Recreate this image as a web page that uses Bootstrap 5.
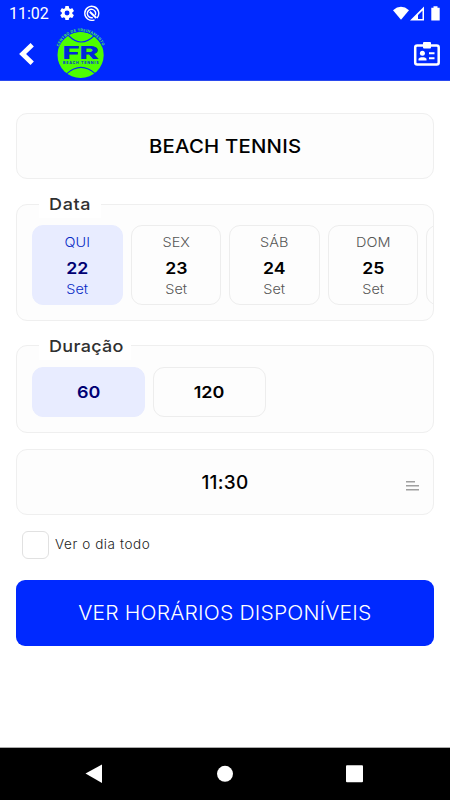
<!DOCTYPE html>
<html lang="pt-BR">
<head>
<meta charset="utf-8">
<meta name="viewport" content="width=device-width, initial-scale=1">
<title>Beach Tennis</title>
<link href="https://cdn.jsdelivr.net/npm/bootstrap@5.3.0/dist/css/bootstrap.min.css" rel="stylesheet">
<style>
body{font-family:Inter,"Open Sans",sans-serif;color:#000;width:450px;height:800px;overflow:hidden;background:#fff}
svg{display:block;flex:none}
.blue{background:#0029ff}
.status{height:27px;padding:0 9px;font:16px/27px Roboto,sans-serif}
.appbar{height:54px;padding:0 10px 0 19px;border-bottom:1px solid #2a49ee}
main{height:667px;padding:32px 16px 0;border-bottom:1px solid #aaa}
.panel{border:1px solid #efefef;border-radius:11px;background:#fdfdfd}
.field{height:66px;font-size:19px;font-weight:500}
.group{position:relative;padding:20px 0 0 15px}
.caption{position:absolute;left:22px;top:-15px;height:28px;line-height:28px;padding:0 13px 0 10px;background:#fff;color:#303030;font-size:16.5px;font-weight:500}
.caption .wide{transform-origin:left}
.dates{height:117px;margin-top:25px}
.times{height:88px;margin-top:24px;padding-top:21px}
.times .caption{top:-14px}
.option{flex:none;border:1px solid #ededed;border-radius:11px;background:#fdfdfd;font-weight:600;font-size:16.5px}
.wide{display:inline-block;transform:scaleX(1.09)}
.day{width:90.5px;height:80px;padding-top:6px}
.day span{font-size:13.5px;line-height:21px;font-weight:300;color:#555;transform:scaleX(1.07)}
.day b{font-weight:600;line-height:31px;transform:scaleX(1.07)}
.day b + span{line-height:10px}
.chosen{background:#e8ecff;border-color:#e8ecff;color:#000073}
.day.chosen span{color:#0629c5}
.duration{width:113px;height:50px}
.box{width:27px;height:28px;border:1px solid #e1e1e1;border-radius:6px;background:#fff}
.check-row{margin:16px 0 0 6px;height:28px;font-size:13px;font-weight:300;color:#222;letter-spacing:.55px}
.check-row .wide{transform:scaleX(1.04);transform-origin:left}
.action{height:66px;margin-top:21px;border-radius:9px;font-size:19.5px;font-weight:300;color:#fff;border:0}
.t-title{display:inline-block;letter-spacing:.2px;padding-top:2px;transform:scaleX(1.07)}
.t-time{letter-spacing:.3px;padding:2px 0 0 27px}
.t-action{display:inline-block;letter-spacing:.15px;transform:scaleX(1.08);margin-top:2px}
.keys{height:52px;background:#000}
</style>
<script src="https://cdn.jsdelivr.net/npm/bootstrap@5.3.0/dist/js/bootstrap.bundle.min.js"></script>
</head>
<body>
<header class="blue text-white">
  <div class="status d-flex align-items-center">
    <span>11:02</span>
    <svg style="margin:-2px 0 0 7px" width="22" height="20" viewBox="0 0 24 24" fill="#fff"><path d="M19.43 12.98c.04-.32.07-.64.07-.98s-.03-.66-.07-.98l2.11-1.65c.19-.15.24-.42.12-.64l-2-3.46c-.12-.22-.39-.3-.61-.22l-2.49 1c-.52-.4-1.08-.73-1.69-.98l-.38-2.65A.488.488 0 0 0 14 2h-4c-.25 0-.46.18-.49.42l-.38 2.65c-.61.25-1.17.59-1.69.98l-2.49-1c-.23-.09-.49 0-.61.22l-2 3.46c-.13.22-.07.49.12.64l2.11 1.65c-.04.32-.07.65-.07.98s.03.66.07.98l-2.11 1.65c-.19.15-.24.42-.12.64l2 3.46c.12.22.39.3.61.22l2.49-1c.52.4 1.08.73 1.69.98l.38 2.65c.03.24.24.42.49.42h4c.25 0 .46-.18.49-.42l.38-2.65c.61-.25 1.17-.59 1.69-.98l2.49 1c.23.09.49 0 .61-.22l2-3.46c.12-.22.07-.49-.12-.64zM12 15.500A3.500 3.500 0 1 1 12 8.500a3.500 3.500 0 0 1 0 7z" transform="translate(2 2) scale(.84)"/></svg>
    <svg style="margin-left:5px" width="17" height="17" viewBox="0 0 17 17" fill="none" stroke="#fff"><path d="M14 13A7 7 0 1 0 11.500 14.800" stroke-width="1.400"/><path d="M12.300 10.300A4.200 4.200 0 1 0 9.800 12.500" stroke-width="1.500"/><path d="M6.800 6.800l6.500 6.200" stroke-width="2"/></svg>
    <svg class="ms-auto" width="49" height="16" viewBox="0 0 49 16" fill="#fff"><path d="M1 4.300Q9 -2.600 17 4.300L9 13.800Z"/><path fill-rule="evenodd" d="M32 .500V14.500H18ZM30.500 4.500L26 9V13H30.500Z"/><path d="M41.500 .300h4v1.500h2.200v12.700h-8.400V1.800h2.200Z"/></svg>
  </div>
  <div class="appbar d-flex align-items-center">
    <svg width="16" height="24" viewBox="0 0 16 24" fill="none" stroke="#fff" stroke-width="4.800"><path d="M13.200 2.800L3.600 12l9.600 9.200"/></svg>
    <svg style="margin-left:20px" width="52" height="54" viewBox="55 27 52 54">
      <defs><path id="arc" d="M58.700 46.700A23.500 23.500 0 0 1 102.800 46.700"/></defs>
      <circle cx="80.600" cy="54.900" r="23.100" fill="#4dff00"/>
      <g fill="none" stroke="#0029ff" stroke-width="1.100"><path d="M68.500 35.500Q81 48.500 94.500 35.500M66.500 73.800Q81 61 95.500 73.800"/></g>
      <path d="M58.500 46.500A23.700 23.700 0 0 1 102.700 46.500" fill="none" stroke="#0029ff" stroke-width="1.500"/>
      <text font-family="Inter,sans-serif" font-size="3.700" font-weight="700" fill="#48e455" textLength="56"><textPath href="#arc">CENTRO DE TREINAMENTO</textPath></text>
      <text x="62.400" y="58.900" font-family="Inter,sans-serif" font-size="17.400" font-weight="800" fill="#0029d9" textLength="36.500" lengthAdjust="spacingAndGlyphs">FR</text>
      <text x="63" y="64" font-family="Inter,sans-serif" font-size="3.600" font-weight="700" fill="#0029d9" textLength="35.500">BEACH TENNIS</text>
    </svg>
    <svg class="ms-auto" style="margin-right:-1px" width="28" height="26" viewBox="0 0 28 26" fill="#fff"><rect x="2.200" y="4.600" width="23.500" height="19" rx="2" fill="none" stroke="#fff" stroke-width="2.500"/><rect x="10" y="1" width="8" height="6.500" rx="1"/><circle cx="9.400" cy="12.300" r="2.500"/><path d="M5.500 19.500v-1.700q1-1.500 2.600-1.600h2.800q1.600.1 2.600 1.600v1.700Z"/><path d="M16 11.300h5.500v1.900H16zM16 16.300h5.500v1.900H16z"/></svg>
  </div>
</header>
<main>
  <section class="panel field d-flex align-items-center justify-content-center"><span class="t-title">BEACH TENNIS</span></section>
  <section class="panel group dates">
    <div class="caption"><span class="wide" style="letter-spacing:.6px">Data</span></div>
    <div class="d-flex gap-2 overflow-hidden text-center">
      <div class="option day chosen d-flex flex-column"><span>QUI</span><b>22</b><span>Set</span></div>
      <div class="option day d-flex flex-column"><span>SEX</span><b>23</b><span>Set</span></div>
      <div class="option day d-flex flex-column"><span>SÁB</span><b>24</b><span>Set</span></div>
      <div class="option day d-flex flex-column"><span>DOM</span><b>25</b><span>Set</span></div>
      <div class="option day"></div>
    </div>
  </section>
  <section class="panel group times">
    <div class="caption"><span class="wide" style="letter-spacing:.3px">Duração</span></div>
    <div class="d-flex gap-2">
      <div class="option duration chosen d-flex align-items-center justify-content-center"><span class="wide">60</span></div>
      <div class="option duration d-flex align-items-center justify-content-center"><span class="wide">120</span></div>
    </div>
  </section>
  <section class="panel field d-flex align-items-center mt-3">
    <span class="t-time flex-grow-1 text-center">11:30</span>
    <svg style="margin:8px 13px 0 0" width="14" height="12" viewBox="0 0 14 12" fill="#a0a0a0"><path d="M0 1h9v1.500H0zM0 5h13v1.500H0zM0 9h13v1.500H0z"/></svg>
  </section>
  <div class="check-row d-flex align-items-center"><div class="box"></div><span class="wide" style="margin-left:6px">Ver o dia todo</span></div>
  <button class="action blue w-100 d-flex align-items-center justify-content-center"><span class="t-action">VER HORÁRIOS DISPONÍVEIS</span></button>
</main>
<nav class="keys">
  <svg width="450" height="52" viewBox="0 748 450 52" fill="#fff"><path d="M85.500 773.500L102 764.500V783Z"/><circle cx="225" cy="773.800" r="8"/><rect x="346" y="765.300" width="17" height="17" rx="1"/></svg>
</nav>
</body>
</html>
